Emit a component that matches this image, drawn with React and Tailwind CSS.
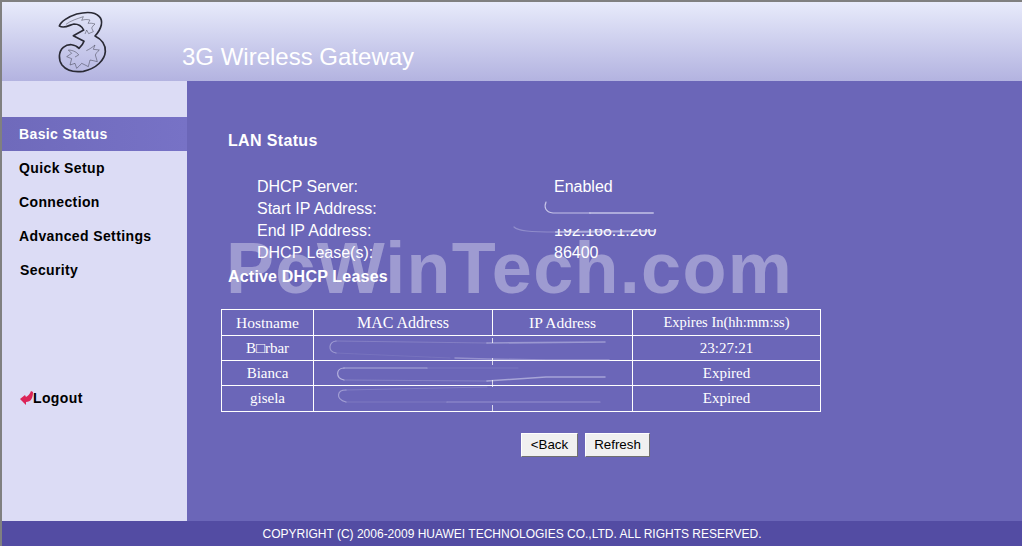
const menu = ['Basic Status', 'Quick Setup', 'Connection', 'Advanced Settings', 'Security']

const lanRows = [
  ['DHCP Server:', 'Enabled'],
  ['Start IP Address:', ''],
  ['End IP Address:', '192.168.1.200'],
  ['DHCP Lease(s):', '86400'],
]

const leases = [
  ['B□rbar', '23:27:21', 'h-[25px]'],
  ['Bianca', 'Expired', 'h-[25px]'],
  ['gisela', 'Expired', 'h-[26px]'],
]

function Logo() {
  return (
    <svg width="80" height="80" viewBox="0 0 240 240" fill="none" stroke="#2a2a35" className="-mt-[2px] block">
      <path
        strokeWidth="5"
        strokeLinejoin="round"
        d="M58 78 C62 65 85 50 110 42 C135 36 165 35 178 50 C190 62 186 85 165 108 C185 118 197 135 196 155 C194 180 170 205 130 214 C100 218 78 210 66 195 C55 180 55 155 70 142 C85 130 105 132 117 145 C125 138 130 130 132 124 L100 107 L131 90 C126 80 115 72 102 72 C90 73 75 88 58 78 Z"
      />
      <path
        strokeWidth="2.2"
        strokeOpacity="0.6"
        strokeLinejoin="round"
        d="M78 73 C92 62 112 56 130 50 C128 54 127 58 125 61 C134 58 142 58 150 60 L144 70 C152 69 158 70 165 72 C160 76 157 80 155 84 L160 95 L146 101 L140 90 L135 102 M139 152 C148 148 157 142 165 135 L160 148 L178 150 C172 155 168 160 166 165 L172 185 C164 183 157 181 150 180 L145 200 C138 196 131 193 125 190 C120 196 115 201 110 205 L105 190 L90 195 L95 176 L80 170 L95 160 L85 150 C92 150 99 152 105 155 C110 158 114 161 116 165 L105 171"
      />
    </svg>
  )
}

// page coordinates, the router's addresses were scratched out in the shot
function Smudges() {
  return (
    <svg width="1022" height="546" viewBox="0 0 1022 546" fill="none" stroke="#e4e3f7" className="pointer-events-none absolute -left-[2px] -top-[2px]">
      <rect x="510" y="216" width="160" height="13" fill="#6b66b8" stroke="none" />
      <g strokeWidth="1.2" strokeLinecap="round" className="blur-[0.4px]">
        <path d="M546 202 C544 207 545 212 553 213 L590 213" strokeOpacity="0.75" />
        <path d="M590 213 L653 213" strokeOpacity="0.55" strokeWidth="2" />
        <path d="M514 227 C518 231 530 232 556 232" strokeOpacity="0.3" />
        <path d="M556 232 L655 231" strokeOpacity="0.55" strokeWidth="2" />

        <path d="M336 341 C329 342 327 351 336 353" strokeOpacity="0.4" />
        <path d="M336 341 L487 343" strokeOpacity="0.2" />
        <path d="M487 343 L605 342" strokeOpacity="0.4" strokeWidth="1.6" />
        <path d="M336 353 L450 358" strokeOpacity="0.1" />
        <path d="M455 358 L487 359 L546 360 L609 360" strokeOpacity="0.35" strokeWidth="1.5" />

        <path d="M344 368 C336 368 335 378 344 380" strokeOpacity="0.6" />
        <path d="M344 368 L427 368" strokeOpacity="0.55" />
        <path d="M427 368 L518 368" strokeOpacity="0.12" />
        <path d="M344 380 L487 381" strokeOpacity="0.22" />
        <path d="M487 381 L546 377 L605 377" strokeOpacity="0.5" strokeWidth="1.5" />

        <path d="M346 390 C337 390 335 399 346 402" strokeOpacity="0.45" />
        <path d="M346 390 L487 387" strokeOpacity="0.18" />
        <path d="M346 402 L447 402" strokeOpacity="0.15" />
        <path d="M447 402 L600 402" strokeOpacity="0.35" />
      </g>
      <g stroke="#ffffff" strokeOpacity="0.75">
        <path d="M492.5 338 V343 M492.5 358 V365 M492.5 380 V387 M492.5 405 V411" />
      </g>
    </svg>
  )
}

export default function App() {
  return (
    <div className="relative flex h-[546px] w-[1022px] flex-col overflow-hidden border-l-2 border-t-2 border-[#808080] font-['Liberation_Sans',Arial,sans-serif]">
      <header className="flex h-[79px] shrink-0 bg-gradient-to-b from-[#e8ebfb] to-[#b3b3e0]">
        <div className="w-[180px] pl-[38px]">
          <Logo />
        </div>
        <h1 className="pt-[39px] text-[24px] leading-[32px] text-white">3G Wireless Gateway</h1>
      </header>

      <div className="flex min-h-0 flex-1">
        <nav className="flex w-[185px] shrink-0 flex-col bg-[#dcdcf5] pt-[36px] text-[14px] font-bold tracking-[0.38px] text-black">
          {menu.map((item, i) => (
            <div
              key={item}
              className={
                i === 0
                  ? 'flex h-[34px] items-center bg-gradient-to-r from-[#6f6abb] to-[#7772c6] pl-[17px] text-white'
                  : i === 4
                    ? 'flex h-[34px] items-center pl-[18px]'
                    : 'flex h-[34px] items-center pl-[17px]'
              }
            >
              {item}
            </div>
          ))}
          <div className="mt-[94px] flex h-[34px] items-center pl-[18px]">
            <svg width="13" height="15" viewBox="0 0 13 15" className="block shrink-0">
              <path d="M0 8 L5 4 L6 6 C8 5 10 3 11 0 L13 1 C13 7 11 11 6 11 L6 14 Z" fill="#dc2458" />
            </svg>
            Logout
          </div>
        </nav>

        <main className="min-w-0 flex-1 bg-[#6b66b8] pl-[34px] pt-[50px] text-white">
          <h2 className="pl-[7px] text-[16px] font-bold leading-[20px] tracking-[0.35px]">LAN Status</h2>
          <div className="mt-[25px] pl-[36px] text-[16px] leading-[22px]">
            {lanRows.map(([label, value]) => (
              <div key={label} className="flex">
                <span className="w-[297px]">{label}</span>
                <span>{value}</span>
              </div>
            ))}
          </div>
          <h2 className="mt-[3px] pl-[7px] text-[16px] font-bold leading-[20px] tracking-[0.2px]">Active DHCP Leases</h2>
          <table className="mt-[22px] w-[600px] table-fixed border-collapse font-['Liberation_Serif','Times_New_Roman',serif] text-[15px]">
            <thead>
              <tr className="h-[26px] text-center">
                <th className="w-[92px] border border-white text-[15.5px] font-normal">Hostname</th>
                <th className="w-[179px] border border-white text-[16px] font-normal">MAC Address</th>
                <th className="w-[140px] border border-white text-[15.5px] font-normal">IP Address</th>
                <th className="border border-white text-[14.5px] font-normal">Expires In(hh:mm:ss)</th>
              </tr>
            </thead>
            <tbody>
              {leases.map(([host, expires, height]) => (
                <tr key={host} className={`${height} text-center`}>
                  <td className="border border-white">{host}</td>
                  <td className="border border-white border-r-transparent"></td>
                  <td className="border border-white border-l-transparent"></td>
                  <td className="border border-white">{expires}</td>
                </tr>
              ))}
            </tbody>
          </table>
          <div className="mt-[21px] flex gap-[7px] pl-[300px] text-[13.33px] text-black">
            <button className="h-[24px] w-[57px] border border-white border-b-[#707070] border-r-[#707070] bg-[#f0f0f0]">&lt;Back</button>
            <button className="h-[24px] w-[65px] border border-white border-b-[#707070] border-r-[#707070] bg-[#f0f0f0]">Refresh</button>
          </div>
        </main>
      </div>

      <footer className="flex h-[25px] shrink-0 items-center justify-center bg-[#534ca3] text-[12px] text-white">
        COPYRIGHT (C) 2006-2009 HUAWEI TECHNOLOGIES CO.,LTD. ALL RIGHTS RESERVED.
      </footer>

      <Smudges />
      <div className="pointer-events-none absolute left-[224px] top-[226px] text-[72px] font-bold leading-[80px] tracking-[1.3px] text-white/35">
        PcWinTech.com
      </div>
    </div>
  )
}
